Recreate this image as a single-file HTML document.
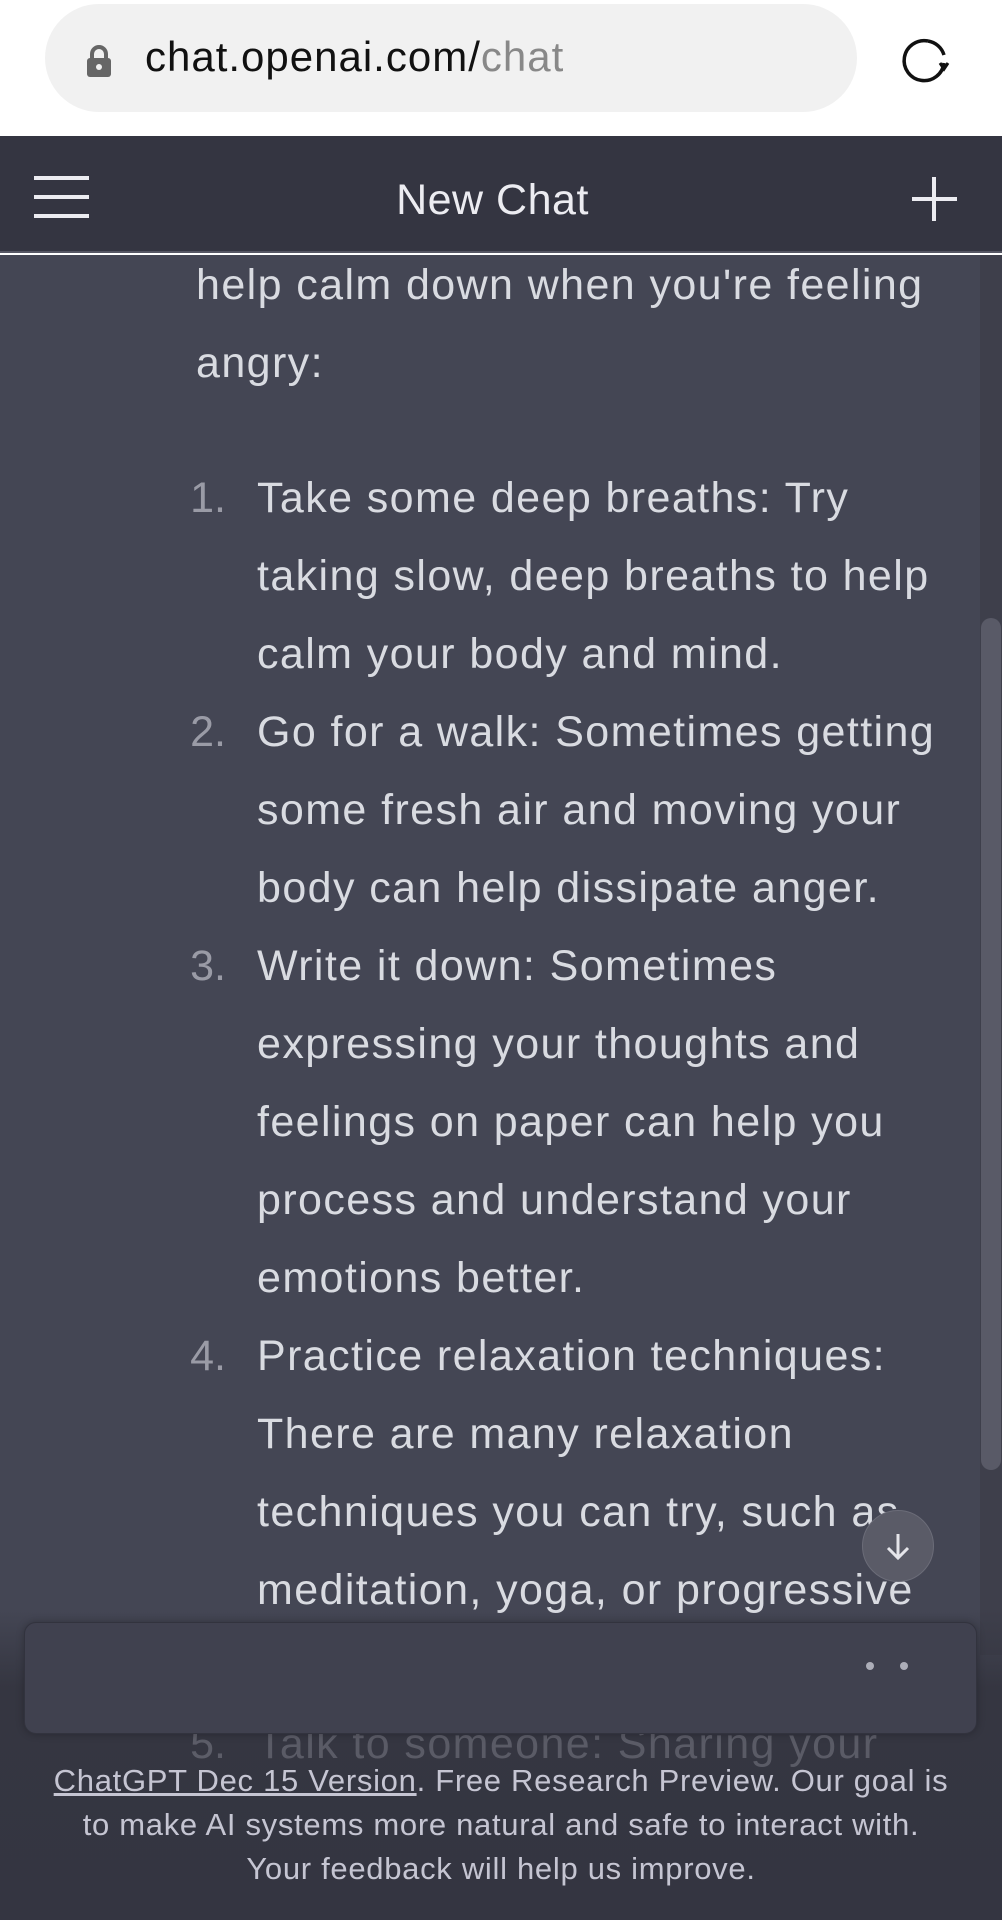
<!DOCTYPE html>
<html><head><meta charset="utf-8"><style>
*{margin:0;padding:0;box-sizing:border-box}
body{width:1002px;height:1920px;overflow:hidden;background:#fff;font-family:"Liberation Sans",sans-serif;position:relative}
.top{position:absolute;left:0;top:0;width:1002px;height:136px;background:#fff}
.pill{position:absolute;left:45px;top:4px;width:812px;height:108px;border-radius:54px;background:#f1f1f1}
.url{position:absolute;left:145px;top:33px;font-size:42px;color:#111;letter-spacing:1px}
.url span{color:#888}
.hdr{position:absolute;left:0;top:136px;width:1002px;height:117px;background:#343541;border-bottom:2px solid #555663}
.title{position:absolute;left:0;width:985px;top:40px;text-align:center;color:#ececf1;font-size:43px;letter-spacing:0.5px}
.main{position:absolute;left:0;top:255px;width:1002px;height:1665px;background:#444654}
.sb{position:absolute;left:980px;top:255px;width:22px;height:1400px;background:#3e3f4b}
.thumb{position:absolute;left:981px;top:618px;width:20px;height:852px;border-radius:10px;background:#595a67}
.l{position:absolute;color:#d9dbe1;font-size:43px;white-space:nowrap;letter-spacing:1.4px}
.n{position:absolute;color:#9a9ba6;font-size:43px;width:60px;text-align:right;left:166px}
.fade{position:absolute;left:0;top:1610px;width:1002px;height:310px;background:linear-gradient(#44465400,#353641 25%,#343541)}
.box{position:absolute;left:24px;top:1622px;width:953px;height:112px;border-radius:12px;background:#40414f;border:1px solid #32333e;box-shadow:0 0 8px rgba(0,0,0,.25)}
.dot{position:absolute;width:8px;height:8px;border-radius:50%;background:#acadb8;top:1662px}
.foot{position:absolute;left:0;width:1002px;text-align:center;color:#c5c5d2;font-size:31px;letter-spacing:0.7px}
</style></head><body>
<div class="top">
 <div class="pill"></div>
 <svg style="position:absolute;left:84px;top:44px" width="30" height="34" viewBox="0 0 30 34"><path d="M8 14V10a7 7 0 0 1 14 0v4" fill="none" stroke="#666" stroke-width="4"/><rect x="3" y="14" width="24" height="19" rx="3" fill="#666"/><circle cx="15" cy="23" r="3" fill="#f1f1f1"/></svg>
 <div class="url">chat.openai.com/<span>chat</span></div>
 <svg style="position:absolute;left:894px;top:30px" width="60" height="60" viewBox="0 0 60 60"><path d="M34 11A20 20 0 1 0 50 33" fill="none" stroke="#111" stroke-width="3.5"/><path d="M34 11A20 20 0 0 1 50 25" fill="none" stroke="#111" stroke-width="3.5"/><path d="M46 33l4 6 4-6" fill="none" stroke="#111" stroke-width="3"/></svg>
</div>
<div class="hdr">
 <div style="position:absolute;left:34px;top:40px;width:55px;height:4px;background:#ececf1"></div>
 <div style="position:absolute;left:34px;top:59px;width:55px;height:4px;background:#ececf1"></div>
 <div style="position:absolute;left:34px;top:78px;width:55px;height:4px;background:#ececf1"></div>
 <div class="title">New Chat</div>
 <div style="position:absolute;left:912px;top:61px;width:45px;height:4px;background:#ececf1"></div>
 <div style="position:absolute;left:932px;top:41px;width:4px;height:44px;background:#ececf1"></div>
</div>
<div class="main"></div>
<div class="sb"></div><div class="thumb"></div>

<div class="l" style="left:196px;top:261px">help calm down when you're feeling</div>
<div class="l" style="left:196px;top:339px">angry:</div>

<div class="n" style="top:474px">1.</div>
<div class="l" style="left:257px;top:474px">Take some deep breaths: Try</div>
<div class="l" style="left:257px;top:552px">taking slow, deep breaths to help</div>
<div class="l" style="left:257px;top:630px">calm your body and mind.</div>
<div class="n" style="top:708px">2.</div>
<div class="l" style="left:257px;top:708px">Go for a walk: Sometimes getting</div>
<div class="l" style="left:257px;top:786px">some fresh air and moving your</div>
<div class="l" style="left:257px;top:864px">body can help dissipate anger.</div>
<div class="n" style="top:942px">3.</div>
<div class="l" style="left:257px;top:942px">Write it down: Sometimes</div>
<div class="l" style="left:257px;top:1020px">expressing your thoughts and</div>
<div class="l" style="left:257px;top:1098px">feelings on paper can help you</div>
<div class="l" style="left:257px;top:1176px">process and understand your</div>
<div class="l" style="left:257px;top:1254px">emotions better.</div>
<div class="n" style="top:1332px">4.</div>
<div class="l" style="left:257px;top:1332px">Practice relaxation techniques:</div>
<div class="l" style="left:257px;top:1410px">There are many relaxation</div>
<div class="l" style="left:257px;top:1488px">techniques you can try, such as</div>
<div class="l" style="left:257px;top:1566px">meditation, yoga, or progressive</div>

<div class="fade"></div>
<div class="n" style="top:1720px;color:#5c5d68">5.</div>
<div class="l" style="left:257px;top:1720px;color:#5a5b66">Talk to someone: Sharing your</div>

<div style="position:absolute;left:862px;top:1510px;width:72px;height:72px;border-radius:50%;background:#5a5b67;border:1px solid #6b6c78"></div>
<svg style="position:absolute;left:880px;top:1528px" width="36" height="36" viewBox="0 0 36 36"><path d="M18 6v24M8 20l10 10 10-10" fill="none" stroke="#e5e5ea" stroke-width="3"/></svg>

<div class="box"></div>
<div class="dot" style="left:866px"></div><div class="dot" style="left:900px"></div>

<div class="foot" style="top:1763px"><span style="text-decoration:underline">ChatGPT Dec 15 Version</span>. Free Research Preview. Our goal is</div>
<div class="foot" style="top:1807px">to make AI systems more natural and safe to interact with.</div>
<div class="foot" style="top:1851px">Your feedback will help us improve.</div>
</body></html>
